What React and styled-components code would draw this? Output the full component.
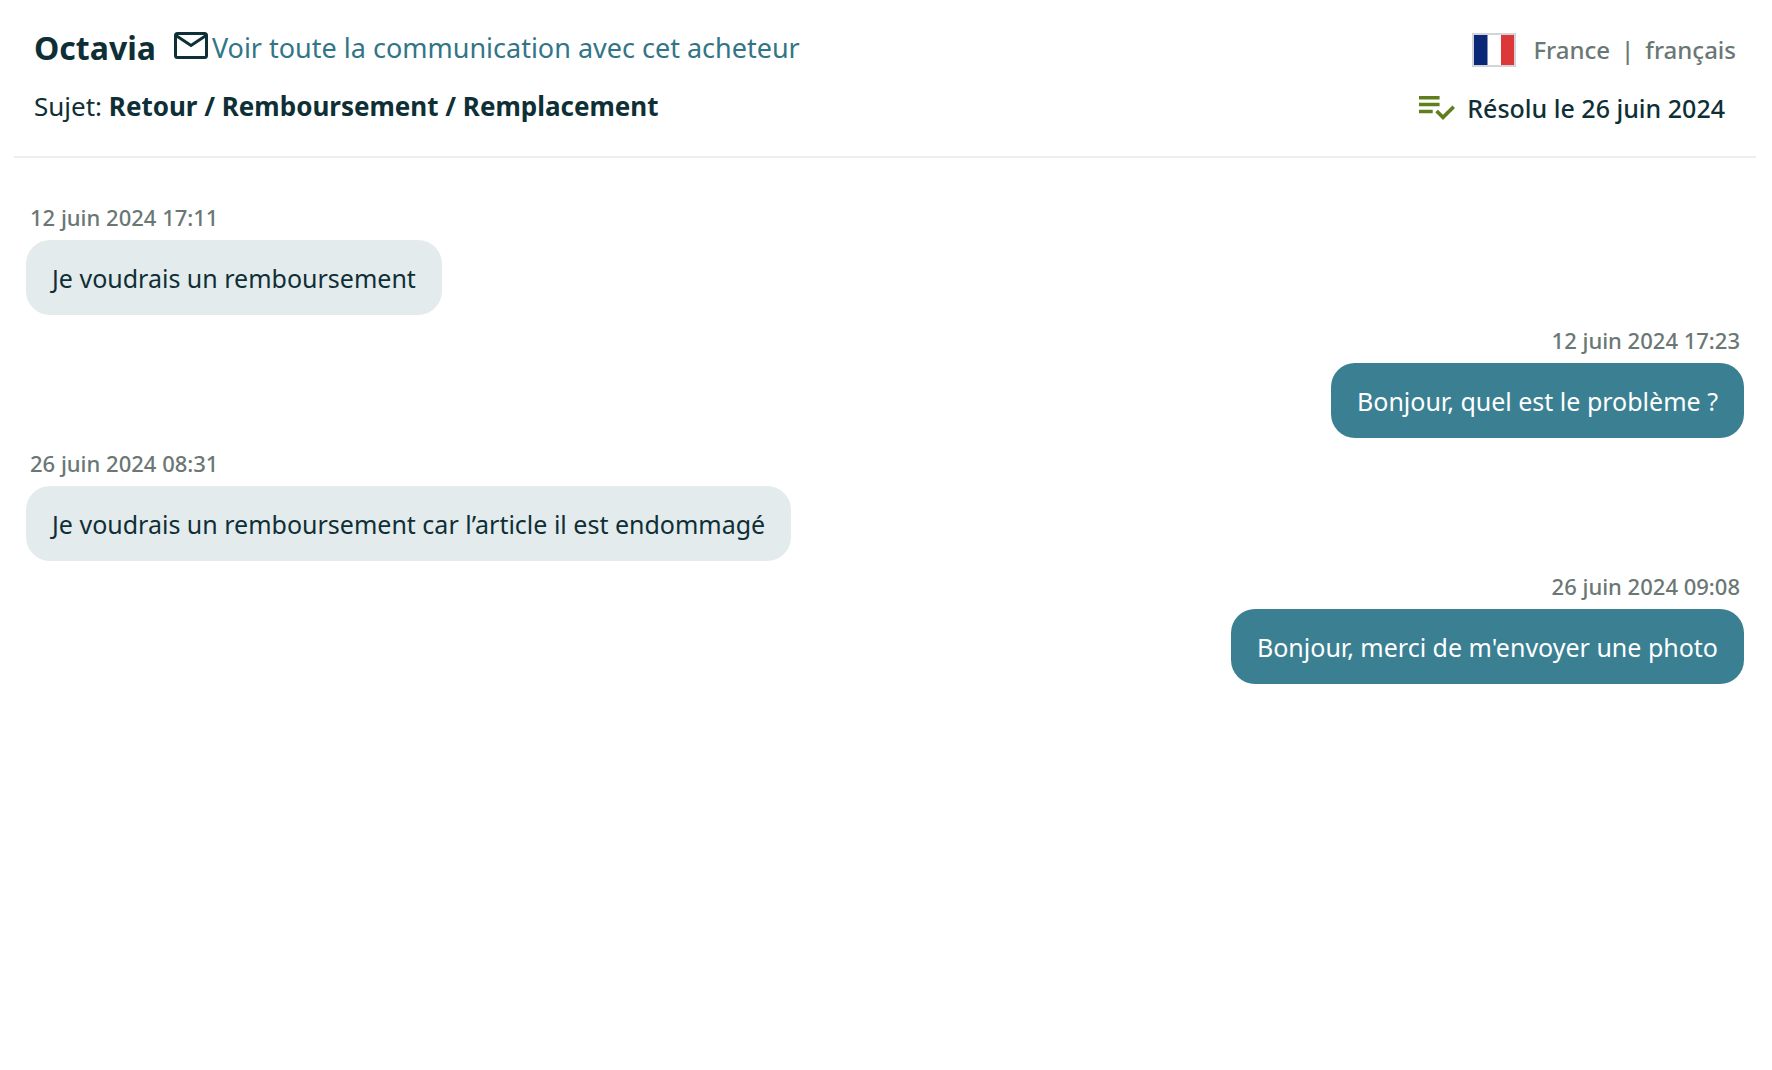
import React from "react";
import styled, { createGlobalStyle } from "styled-components";

const GlobalStyle = createGlobalStyle`
  * {
    box-sizing: border-box;
  }
  body {
    margin: 0;
    background-color: #fff;
    color: #0f2f36;
    font-family: "Noto Sans", "Open Sans", sans-serif;
    font-size: 25px;
    font-weight: 500;
    line-height: 36px;
  }
`;

const Page = styled.main`
  padding: 0 16px 0 14px;
`;
const Header = styled.header`
  display: flex;
  justify-content: space-between;
  padding: 30px 20px;
  border-bottom: 2px solid #eee;
`;
const Column = styled.div`
  display: flex;
  flex-direction: column;
  align-items: ${({ $end }) => ($end ? "flex-end" : "flex-start")};
  gap: 22px;
  padding-top: ${({ $end }) => ($end ? 2 : 0)}px;
`;
const Row = styled.div`
  display: flex;
  align-items: center;
  gap: ${({ $gap }) => $gap || 0}px;
  height: 36px;
`;
const BuyerName = styled.h1`
  margin: 0 18px 0 0;
  font-size: 32px;
  font-weight: 700;
`;
const MailLink = styled.a`
  display: flex;
  align-items: center;
  gap: 4px;
  color: #327587;
  font-size: 27px;
  font-weight: 400;
  text-decoration: none;

  svg {
    margin-bottom: 6px;
  }
`;
const Subject = styled.p`
  margin: 0;
  font-size: 26px;
  font-weight: 400;
`;
const Locale = styled.span`
  color: #6a7775;
  font-size: 24px;
`;
const Resolved = styled(Row)`
  margin-right: 11px;
`;
const Flag = styled.svg`
  display: block;
  margin-right: 6px;
  border: 2px solid #d2d4d9;
`;
const Thread = styled.ol`
  display: flex;
  flex-direction: column;
  gap: 7px;
  margin: 0;
  padding: 41px 12px;
  list-style: none;
`;
const Message = styled.li`
  display: flex;
  flex-direction: column;
  align-items: ${({ $seller }) => ($seller ? "flex-end" : "flex-start")};
  gap: 5px;
`;
const Time = styled.time`
  padding: 0 4px;
  color: #6a7775;
  font-size: 22px;
`;
const Bubble = styled.p`
  margin: 0;
  padding: 20px 26px 19px;
  border-radius: 24px;
  background-color: ${({ $seller }) => ($seller ? "#3a8092" : "#e4ebed")};
  color: ${({ $seller }) => ($seller ? "#fff" : "#0f2f36")};
  font-weight: 400;
`;

const MailIcon = () => (
  <svg width="34" height="27" viewBox="0 0 34 27" fill="none" stroke="#0f2f36" aria-hidden="true">
    <rect x="1.5" y="1.5" width="31" height="24" rx="2" strokeWidth="3" />
    <path d="M2 3.5 17 13.5 32 3.5" strokeWidth="3" />
  </svg>
);

const ResolvedIcon = () => (
  <svg width="36" height="24" viewBox="2 6 21 14" fill="#5f7f1c" aria-hidden="true">
    <path d="M14 10H2v2h12v-2zm0-4H2v2h12V6zM2 16h8v-2H2v2zm19.5-4.5L23 13l-6.99 7-4.51-4.5L13 14l3.01 3 5.49-5.5z" />
  </svg>
);

const messages = [
  { time: "12 juin 2024 17:11", text: "Je voudrais un remboursement" },
  { time: "12 juin 2024 17:23", text: "Bonjour, quel est le problème ?", seller: true },
  {
    time: "26 juin 2024 08:31",
    text: "Je voudrais un remboursement car l’article il est endommagé",
  },
  { time: "26 juin 2024 09:08", text: "Bonjour, merci de m'envoyer une photo", seller: true },
];

const App = () => {
  return (
    <Page>
      <GlobalStyle />
      <Header>
        <Column>
          <Row>
            <BuyerName>Octavia</BuyerName>
            <MailLink href="#communication">
              <MailIcon />
              Voir toute la communication avec cet acheteur
            </MailLink>
          </Row>
          <Subject>
            Sujet: <strong>Retour / Remboursement / Remplacement</strong>
          </Subject>
        </Column>
        <Column $end>
          <Row $gap={11}>
            <Flag width="44" height="34" viewBox="0 0 40 30" aria-hidden="true">
              <rect width="40" height="30" fill="#fff" />
              <rect width="13.5" height="30" fill="#0a2778" />
              <rect x="27" width="13" height="30" fill="#dd3839" />
            </Flag>
            <Locale>France</Locale>
            <Locale>|</Locale>
            <Locale>français</Locale>
          </Row>
          <Resolved $gap={12}>
            <ResolvedIcon />
            Résolu le 26 juin 2024
          </Resolved>
        </Column>
      </Header>
      <Thread>
        {messages.map(({ time, text, seller }) => (
          <Message key={time} $seller={seller}>
            <Time>{time}</Time>
            <Bubble $seller={seller}>{text}</Bubble>
          </Message>
        ))}
      </Thread>
    </Page>
  );
};

export default App;
